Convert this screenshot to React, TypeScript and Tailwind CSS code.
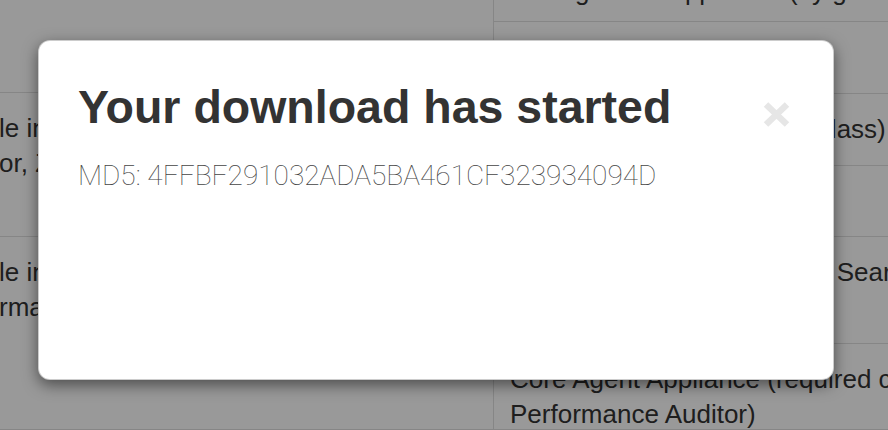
import React from "react";

const leftRows = [
  { h: "h-[165px]", lines: [] as string[] },
  { h: "h-[144px]", lines: ["le in the Web Console", "or, Zone Manager"] },
  { h: "h-[193px]", lines: ["le in the Web Console", "rmance Auditor"] },
];

const rightRows = [
  { h: "h-[94px]", pt: "pt-[11px]", lines: ["Integration Agent Appliance", "Management Appliance (by gateway)"] },
  { h: "h-[72px]", pt: "pt-[18px]", lines: [] as string[] },
  { h: "h-[72px]", pt: "pt-[18px]", lines: ["Core Agent Appliance (HA class)"] },
  { h: "h-[71px]", pt: "pt-[18px]", lines: [] as string[] },
  { h: "h-[107px]", pt: "pt-[18px]", lines: ["Core Agent Appliance (wide Search", "only)"] },
  { h: "h-[86px]", pt: "pt-[18px]", lines: ["Core Agent Appliance (required component", "Performance Auditor)"] },
];

function CloseIcon() {
  return (
    <svg width="29" height="27" viewBox="0 0 29 27" className="mt-[17px] shrink-0">
      <path d="M4 3.5 L25 23.5 M25 3.5 L4 23.5" stroke="#e6e6e6" strokeWidth="6.5" fill="none" />
    </svg>
  );
}

export default function App() {
  return (
    <div className="relative h-[430px] w-[888px] overflow-hidden bg-white font-['Liberation_Sans',Arial,sans-serif] text-[26px] leading-[35px] text-[#333]">
      <div className="-mt-[72px] flex">
        <div className="w-[494px] shrink-0 border-r border-[#e0e0e0]">
          {leftRows.map((r, i) => (
            <div key={i} className={`${r.h} border-b border-[#e0e0e0] pt-[18px] -ml-[1px] whitespace-nowrap`}>
              {r.lines.map((l) => (
                <div key={l}>{l}</div>
              ))}
            </div>
          ))}
        </div>
        <div className="flex-1">
          {rightRows.map((r, i) => (
            <div key={i} className={`${r.h} ${r.pt} border-b border-[#e0e0e0] pl-[16px] whitespace-nowrap`}>
              {r.lines.map((l) => (
                <div key={l}>{l}</div>
              ))}
            </div>
          ))}
        </div>
      </div>

      <div className="absolute inset-0 bg-black/40 pl-[38px] pt-[40px]">
        <div className="h-[340px] w-[796px] rounded-[12px] border border-black/20 bg-white pl-[39px] pr-[42px] pt-[43px] shadow-[0_5px_15px_rgba(0,0,0,0.5)]">
          <div className="flex items-start justify-between">
            <h1 className="text-[46.5px] font-bold leading-none text-[#333]">Your download has started</h1>
            <CloseIcon />
          </div>
          <p className="mt-[31px] font-['Roboto',sans-serif] text-[28px] font-thin leading-none text-[#444]">
            MD5: 4FFBF291032ADA5BA461CF323934094D
          </p>
        </div>
      </div>
    </div>
  );
}
